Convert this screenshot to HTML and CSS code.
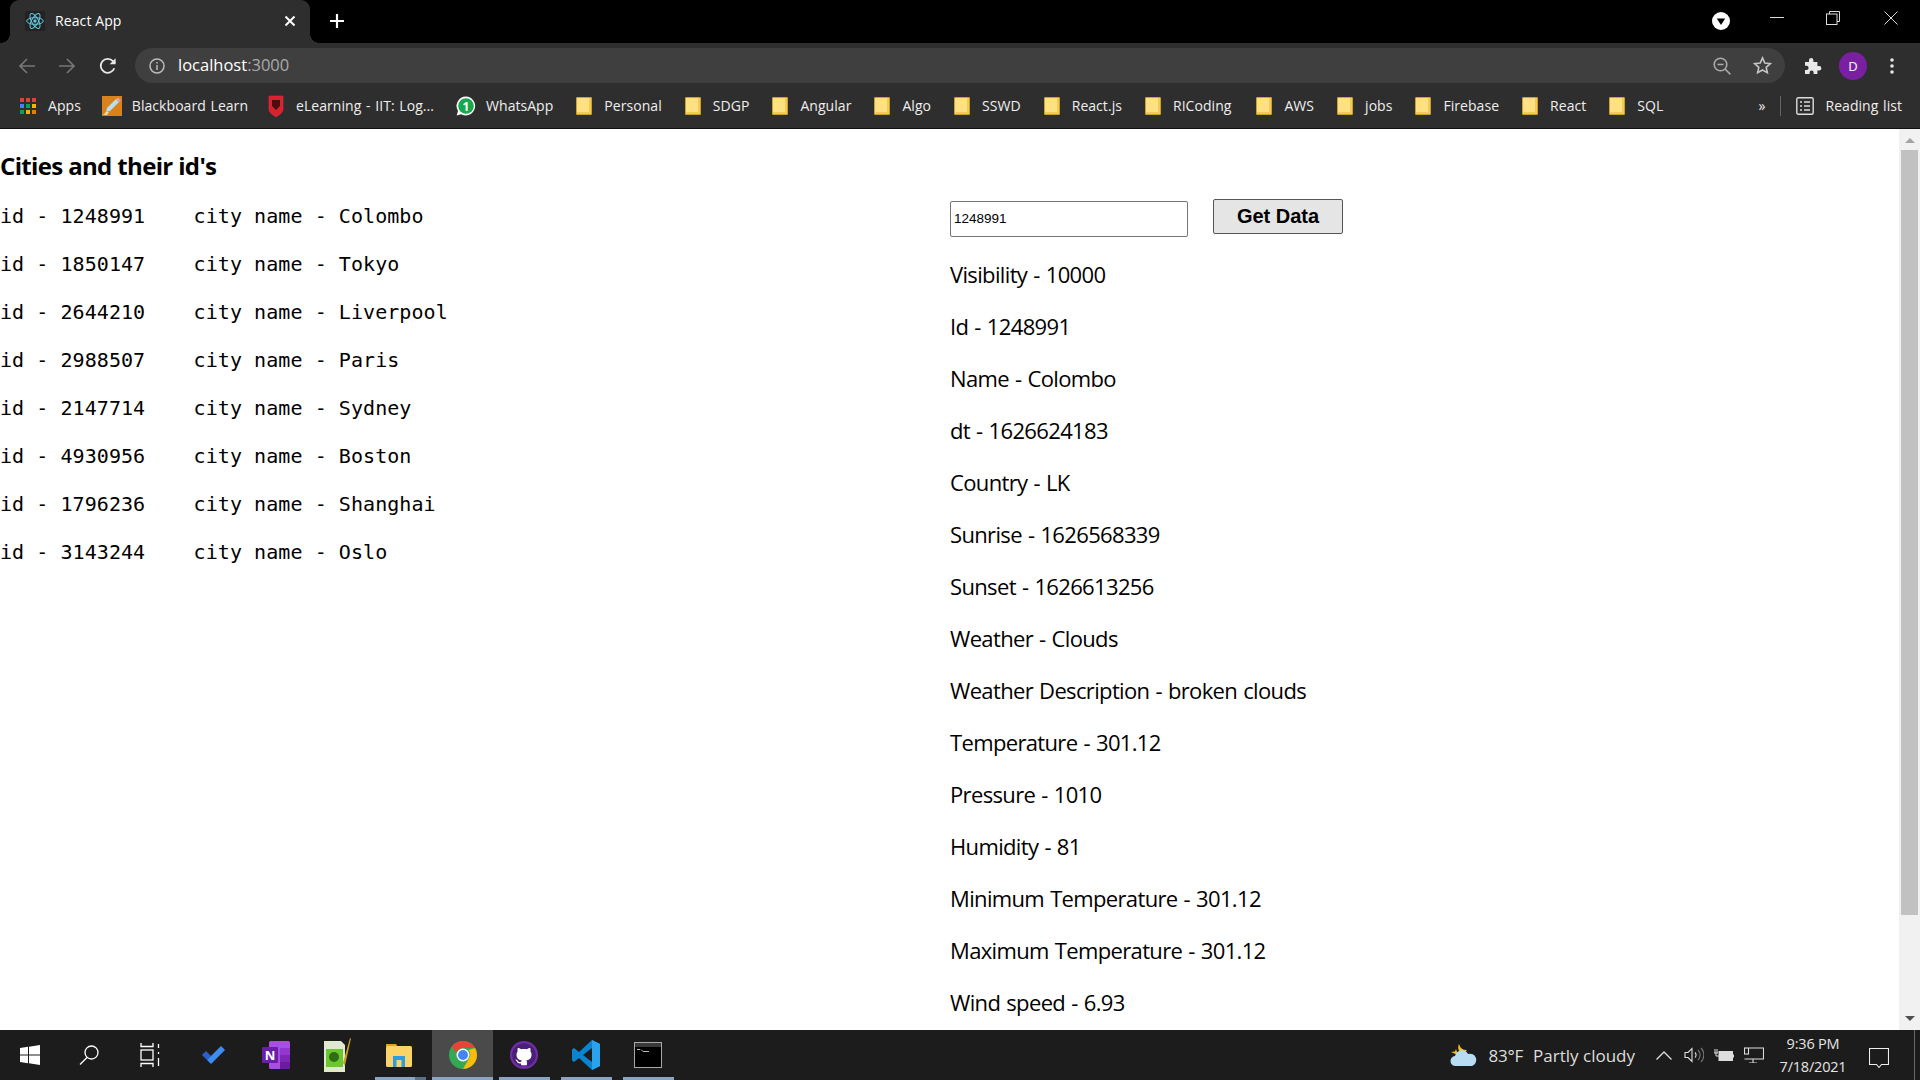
FILE: index.html
```html
<!DOCTYPE html>
<html lang="en">
<head>
<meta charset="utf-8">
<title>React App</title>
<link rel="stylesheet" href="styles.css">
</head>
<body>
<div class="screen">
  <header class="titlebar">
    <div class="tab">
      <span class="favicon"><svg viewBox="0 0 24 24" width="20" height="20" fill="none" stroke="#61c8dc" stroke-width="1.2"><ellipse cx="12" cy="12" rx="10" ry="4"/><ellipse cx="12" cy="12" rx="10" ry="4" transform="rotate(60 12 12)"/><ellipse cx="12" cy="12" rx="10" ry="4" transform="rotate(120 12 12)"/><circle cx="12" cy="12" r="2" fill="#61c8dc" stroke="none"/></svg></span>
      <span class="tab-title">React App</span>
      <svg class="tab-close" viewBox="0 0 12 12" width="12" height="12" stroke="#fff" stroke-width="2"><path d="M1.5 1.5l9 9M10.5 1.5l-9 9"/></svg>
    </div>
    <svg class="new-tab" viewBox="0 0 16 16" width="16" height="16" stroke="#fff" stroke-width="2.2"><path d="M8 1v14M1 8h14"/></svg>
    <div class="window-tools">
      <svg class="media" viewBox="0 0 18 18" width="18" height="18"><circle cx="9" cy="9" r="9" fill="#fff"/><path d="M4.8 6.5h8.4L9 13z" fill="#000"/></svg>
      <svg class="win-btn min" viewBox="0 0 14 14" width="14" height="14" stroke="#ddd"><path d="M0 6.5h14"/></svg>
      <svg class="win-btn rest" viewBox="0 0 14 14" width="14" height="14" fill="none" stroke="#ddd"><path d="M3.5 3V.5h10v10H11"/><rect x=".5" y="3" width="10.5" height="10.5"/></svg>
      <svg class="win-btn close" viewBox="0 0 14 14" width="14" height="14" stroke="#ddd"><path d="M.5.5l13 13M13.5.5l-13 13"/></svg>
    </div>
  </header>

  <nav class="toolbar">
    <svg class="nav back" viewBox="0 0 18 18" width="18" height="18" fill="none" stroke="#777" stroke-width="1.7"><path d="M17 9H2M9 2L2 9l7 7"/></svg>
    <svg class="nav fwd" viewBox="0 0 18 18" width="18" height="18" fill="none" stroke="#777" stroke-width="1.7"><path d="M1 9h15M9 2l7 7-7 7"/></svg>
    <svg class="nav reload" viewBox="0 0 18 18" width="18" height="18" fill="none" stroke="#e6e6e6" stroke-width="1.8"><path d="M15.3 11.3A7 7 0 1 1 14 4.2L16 6.4"/><path d="M16.6 1.2v6h-6" fill="#e6e6e6" stroke="none"/></svg>
    <div class="omnibox">
      <svg class="info" viewBox="0 0 16 16" width="16" height="16" fill="none" stroke="#bbb" stroke-width="1.5"><circle cx="8" cy="8" r="7"/><path d="M8 7v5M8 4v1.6"/></svg>
      <span class="url">localhost<span class="port">:3000</span></span>
      <span class="spacer"></span>
      <svg class="zoom-icon" viewBox="0 0 18 18" width="18" height="18" fill="none" stroke="#aaa" stroke-width="1.6"><circle cx="7.5" cy="7.5" r="6.3"/><path d="M4.5 7.5h6M12 12l5.4 5.4"/></svg>
      <svg class="star" viewBox="0 0 20 20" width="19" height="19" fill="none" stroke="#c4c4c4" stroke-width="1.7"><path d="M10 2l2.4 5.4 5.8.6-4.3 3.9 1.2 5.7L10 14.7l-5.1 2.9 1.2-5.7L1.8 8l5.8-.6z"/></svg>
    </div>
    <svg class="puzzle" viewBox="0 0 18 18" width="18" height="18" fill="#e8e8e8"><path d="M1 5h4V3.2a2.2 2.2 0 0 1 4.4 0V5h4v4h1.8a2.2 2.2 0 0 1 0 4.4h-1.8V17H9.6v-1.6a2 2 0 0 0-4 0V17H1v-4h1.5a2.1 2.1 0 0 0 0-4.2H1z"/></svg>
    <span class="avatar">D</span>
    <svg class="kebab" viewBox="0 0 4 16" width="4" height="16" fill="#e6e6e6"><circle cx="2" cy="2" r="1.8"/><circle cx="2" cy="8" r="1.8"/><circle cx="2" cy="14" r="1.8"/></svg>
  </nav>

  <nav class="bookmarks">
    <a class="bm apps"><svg viewBox="0 0 16 16" width="16" height="16"><g fill="#db4437"><rect width="4" height="4"/><rect x="6" width="4" height="4"/><rect x="12" width="4" height="4"/></g><g fill="#4285f4"><rect y="6" width="4" height="4"/></g><rect x="6" y="6" width="4" height="4" fill="#0f9d58"/><rect x="12" y="6" width="4" height="4" fill="#f4b400"/><rect y="12" width="4" height="4" fill="#0f9d58"/><rect x="6" y="12" width="4" height="4" fill="#f4b400"/><rect x="12" y="12" width="4" height="4" fill="#e67c00"/></svg><span>Apps</span></a>
    <a class="bm"><svg class="wide" viewBox="0 0 20 20" width="20" height="20"><rect width="20" height="20" fill="#d9821c"/><path d="M4 16l1-4L14 3l3 3-9 9z" fill="#b6e0ee"/><path d="M14 3l2-1.500 3 3L17 6z" fill="#e79bb0"/><path d="M1 19l3-3 3 0-2 3z" fill="#f7d9a0"/></svg><span>Blackboard Learn</span></a>
    <a class="bm tight-3"><svg viewBox="0 0 16 22" width="16" height="22"><path d="M1 1h14v13c0 4-4 6-7 8-3-2-7-4-7-8z" fill="#d8232a" stroke="#f26" stroke-width=".5"/><path d="M4 5h8v6l-4 4-4-4z" fill="#4a0d10"/></svg><span>eLearning - IIT: Log...</span></a>
    <a class="bm tight-1"><svg class="wide" viewBox="0 0 20 20" width="20" height="20"><path d="M10 .5a9.500 9.500 0 0 0-8 14.500L.7 19.500 5 18.300A9.500 9.500 0 1 0 10 .5z" fill="#fff"/><circle cx="10" cy="10" r="7.800" fill="#17a84b"/><text x="10" y="14.500" class="wa-num">1</text></svg><span>WhatsApp</span></a>
    <a class="bm"><i class="folder"></i><span>Personal</span></a>
    <a class="bm"><i class="folder"></i><span>SDGP</span></a>
    <a class="bm"><i class="folder"></i><span>Angular</span></a>
    <a class="bm"><i class="folder"></i><span>Algo</span></a>
    <a class="bm"><i class="folder"></i><span>SSWD</span></a>
    <a class="bm"><i class="folder"></i><span>React.js</span></a>
    <a class="bm"><i class="folder"></i><span>RICoding</span></a>
    <a class="bm loose-2"><i class="folder"></i><span>AWS</span></a>
    <a class="bm"><i class="folder"></i><span>jobs</span></a>
    <a class="bm"><i class="folder"></i><span>Firebase</span></a>
    <a class="bm"><i class="folder"></i><span>React</span></a>
    <a class="bm"><i class="folder"></i><span>SQL</span></a>
    <span class="spacer"></span>
    <span class="more">»</span>
    <i class="bm-divider"></i>
    <a class="bm reading"><svg viewBox="0 0 18 18" width="18" height="18" fill="none" stroke="#ddd" stroke-width="1.400"><rect x=".8" y=".8" width="16.400" height="16.400" rx="1.500"/><path d="M4 5h2M4 9h2M4 13h2M8 5h6M8 9h6M8 13h6"/></svg><span>Reading list</span></a>
  </nav>

  <div class="viewport">
    <main class="page">
      <section class="cities">
        <h2 class="cities-title">Cities and their id's</h2>
        <p class="city">id - 1248991    city name - Colombo</p>
        <p class="city">id - 1850147    city name - Tokyo</p>
        <p class="city">id - 2644210    city name - Liverpool</p>
        <p class="city">id - 2988507    city name - Paris</p>
        <p class="city">id - 2147714    city name - Sydney</p>
        <p class="city">id - 4930956    city name - Boston</p>
        <p class="city">id - 1796236    city name - Shanghai</p>
        <p class="city">id - 3143244    city name - Oslo</p>
      </section>
      <section class="weather">
        <form class="search">
          <input class="search-input" type="text" value="1248991">
          <button class="search-btn" type="button">Get Data</button>
        </form>
        <p class="stat">Visibility - 10000</p>
        <p class="stat">Id - 1248991</p>
        <p class="stat">Name - Colombo</p>
        <p class="stat">dt - 1626624183</p>
        <p class="stat">Country - LK</p>
        <p class="stat">Sunrise - 1626568339</p>
        <p class="stat">Sunset - 1626613256</p>
        <p class="stat">Weather - Clouds</p>
        <p class="stat">Weather Description - broken clouds</p>
        <p class="stat">Temperature - 301.12</p>
        <p class="stat">Pressure - 1010</p>
        <p class="stat">Humidity - 81</p>
        <p class="stat">Minimum Temperature - 301.12</p>
        <p class="stat">Maximum Temperature - 301.12</p>
        <p class="stat">Wind speed - 6.93</p>
      </section>
    </main>
    <aside class="scrollbar">
      <span class="arrow up"></span>
      <span class="thumb"></span>
      <span class="spacer"></span>
      <span class="arrow down"></span>
    </aside>
  </div>

  <footer class="taskbar">
    <div class="task-icons">
      <span class="task"><svg viewBox="0 0 20 20" width="20" height="20" fill="#fff"><path d="M0 3l8-1.200V9.500H0zM9 1.700L20 0v9.500H9zM0 10.500h8v7.700L0 17zM9 10.500h11V20L9 18.300z"/></svg></span>
      <span class="task"><svg viewBox="0 0 20 20" width="20" height="20" fill="none" stroke="#fff" stroke-width="1.300"><circle cx="12.500" cy="7.500" r="6.500"/><path d="M8 12.500L1 19.500"/></svg></span>
      <span class="task"><svg viewBox="0 0 20 24" width="20" height="24" fill="none" stroke="#fff" stroke-width="1.300"><path d="M1 0v3.500h12V0M1 24v-3.500h12V24"/><rect x="1" y="7" width="12" height="10"/><path d="M18.500 1v4M18.500 9v2M18.500 15v8"/></svg></span>
      <span class="task"><svg viewBox="0 0 24 24" width="24" height="24"><path d="M1 12l4-4 5 5-4 4z" fill="#2a60c8"/><path d="M6 17L20 3l4 4L10 21z" fill="#3f8cf0"/></svg></span>
      <span class="task"><svg viewBox="0 0 30 30" width="30" height="30"><rect x="8" y="1" width="21" height="28" rx="1.500" fill="#a64fe0"/><rect x="19" y="8" width="10" height="7" fill="#9238d0"/><rect x="19" y="15" width="10" height="7" fill="#7e26b8"/><rect x="19" y="22" width="10" height="7" fill="#6a1c9c"/><rect x="1" y="7" width="16" height="16" rx="1" fill="#6a1fa8"/><text x="9" y="20" class="one-n">N</text></svg></span>
      <span class="task"><svg viewBox="0 0 30 36" width="30" height="36"><path d="M2 4h17l4 4v27H2z" fill="#dfe8d0"/><rect x="4" y="12" width="17" height="18" fill="#6cc72e"/><circle cx="12" cy="20" r="5" fill="#2e6d12"/><path d="M21 26L28 1l1 .5-6 27z" fill="#c9a020"/></svg></span>
      <span class="task run-files"><svg viewBox="0 0 28 28" width="28" height="28"><path d="M1 3h10l2 3H1z" fill="#e0a020"/><rect x="1" y="5" width="26" height="21" rx="1.500" fill="#fbd468"/><path d="M8 26V15h12v11h-3.500v-7h-5v7z" fill="#2f9be0"/></svg></span>
      <span class="task active"><svg viewBox="0 0 28 28" width="28" height="28"><circle cx="14" cy="14" r="14" fill="#34a853"/><path d="M14 0a14 14 0 0 1 12.100 7H14a7 7 0 0 0-6.700 5L2.900 5.500A14 14 0 0 1 14 0z" fill="#ea4335"/><path d="M26.100 7A14 14 0 0 1 14 28l6-10.500A7 7 0 0 0 19.500 9z" fill="#fbbc05"/><circle cx="14" cy="14" r="6.500" fill="#fff"/><circle cx="14" cy="14" r="5" fill="#4285f4"/></svg></span>
      <span class="task run"><svg viewBox="-1.500 -1.500 19 19" width="28" height="28"><circle cx="8" cy="8" r="9.500" fill="#6f2da8"/><circle cx="8" cy="8" r="7" fill="#fff"/><path fill="#4a1f78" d="M8 0C3.580 0 0 3.580 0 8c0 3.540 2.290 6.530 5.470 7.590.4.070.55-.17.55-.38 0-.19-.01-.82-.01-1.490-2.010.37-2.530-.49-2.690-.94-.09-.23-.48-.94-.82-1.130-.28-.15-.68-.52-.01-.53.63-.01 1.080.58 1.230.82.72 1.210 1.870.87 2.330.66.070-.52.28-.87.51-1.070-1.780-.2-3.640-.89-3.640-3.950 0-.87.31-1.590.82-2.150-.08-.2-.36-1.020.08-2.120 0 0 .67-.21 2.200.82.64-.18 1.320-.27 2-.27.68 0 1.360.09 2 .27 1.530-1.040 2.200-.82 2.200-.82.44 1.100.16 1.920.08 2.120.51.56.82 1.270.82 2.150 0 3.070-1.870 3.750-3.650 3.950.29.25.54.73.54 1.480 0 1.070-.01 1.930-.01 2.200 0 .21.15.46.55.38A8.013 8.013 0 0016 8c0-4.420-3.580-8-8-8z"/></svg></span>
      <span class="task run"><svg viewBox="0 0 28 30" width="28" height="30"><path d="M20 0l8 4v22l-8 4L7 18l-5 4-2-1.500V9.500L2 8l5 4z" fill="#0a84d0"/><path d="M20 8v14l-9-7z" fill="#1c1c1c"/><path d="M20 0l8 4v22l-8 4z" fill="#2ba3ec"/></svg></span>
      <span class="task run last"><svg viewBox="0 0 28 26" width="28" height="26"><rect width="28" height="26" fill="#a8a8a8"/><rect x="1" y="1" width="26" height="4" fill="#3a3a3a"/><rect x="1" y="5" width="26" height="20" fill="#000"/><path d="M3 7.500h3M7 7.500l2 2h6" stroke="#bbb" fill="none"/></svg></span>
    </div>
    <span class="spacer"></span>
    <div class="tray">
      <svg class="tray-weather" viewBox="0 0 28 24" width="28" height="24"><path d="M9 1a7 7 0 0 0 2 9 7 7 0 0 0 6-3A8 8 0 0 1 9 1z" fill="#f7c21e"/><path d="M1 9l4-.5L6 6l2 6z" fill="#f7c21e"/><path d="M6 23a5 5 0 0 1-1-10 7 7 0 0 1 13-2 6 6 0 0 1 4 12z" fill="#b8dcf4"/></svg>
      <span class="tray-temp">83°F</span>
      <span class="tray-cond">Partly cloudy</span>
      <svg class="chev" viewBox="0 0 16 9" width="16" height="9" fill="none" stroke="#ddd" stroke-width="1.300"><path d="M.5 8.500L8 1l7.500 7.500"/></svg>
      <svg class="sys" viewBox="0 0 20 16" width="20" height="16" fill="none" stroke="#ddd" stroke-width="1.100"><path d="M1 5.500h3L8 1.500v13l-4-4H1z"/><path d="M11 5.500a3.500 3.500 0 0 1 0 5"/><path d="M14 3a7 7 0 0 1 0 10M17 1a10 10 0 0 1 0 14" stroke="#777"/></svg>
      <svg class="sys" viewBox="0 0 20 14" width="20" height="14" fill="none" stroke="#ddd"><path d="M1 1v4M3 1v4M0 5h4M2 5v3h3"/><rect x="5" y="3.500" width="13.500" height="9" fill="#ddd"/><path d="M19.500 6.500v3"/></svg>
      <svg class="sys" viewBox="0 0 20 16" width="20" height="16" fill="none" stroke="#ddd" stroke-width="1.100"><path d="M5 1h14.500v11H.5M5 16h8M9 12v4"/><rect x=".5" y="1" width="4" height="6"/></svg>
      <div class="clock"><span>9:36 PM</span><span>7/18/2021</span></div>
      <svg class="notify" viewBox="0 0 20 21" width="20" height="21" fill="none" stroke="#eee" stroke-width="1.100"><path d="M.5.500h19v16h-7l-2.500 3-2.500-3h-7z"/></svg>
      <i class="show-desktop"></i>
    </div>
  </footer>
</div>
</body>
</html>
```
FILE: styles.css
```css
* { box-sizing: border-box; }
html, body { margin: 0; height: 100%; overflow: hidden; }
body { font-family: "Open Sans", "Noto Sans", sans-serif; background: #fff; }
svg { display: block; flex: none; }
.spacer { flex: 1; }
.screen { display: flex; flex-direction: column; width: 1920px; height: 1080px; }

/* title bar */
.titlebar { display: flex; align-items: center; height: 43px; padding-bottom: 1px; background: #000; flex: none; }
.tab { position: relative; display: flex; align-items: center; align-self: flex-end; width: 300px; height: 43px; margin: 0 0 -1px 10px; padding: 0 14px 2px 15px; background: #2e2e2e; border-radius: 9px 9px 0 0; color: #fff; font-size: 14px; }
.tab::before, .tab::after { content: ""; position: absolute; bottom: 0; width: 9px; height: 9px; background: radial-gradient(circle at 0 0, #000 8.5px, #2e2e2e 9px); }
.tab::before { left: -9px; }
.tab::after { right: -9px; transform: scaleX(-1); }
.favicon { display: flex; margin-right: 10px; background: #222; }
.tab-title { flex: 1; letter-spacing: .1px; }
.new-tab { margin-left: 19px; }
.window-tools { display: flex; align-items: center; margin-left: auto; }
.media { margin-right: 40px; }
.win-btn { margin-top: -6px; }
.min { margin-right: 42px; }
.rest { margin-right: 44px; }
.close { margin-right: 22px; }

/* toolbar */
.toolbar { display: flex; align-items: center; height: 43px; background: #2e2e2e; flex: none; padding: 5px 0 3px; }
.back { margin-left: 18px; }
.fwd { margin-left: 22px; }
.reload { margin-left: 23px; }
.omnibox { display: flex; align-items: center; width: 1650px; height: 35px; margin-left: 18px; padding: 0 13px 0 14px; background: #3f3f3f; border-radius: 18px; }
.info { margin-right: 13px; }
.url { padding-bottom: 2px; color: #fff; font-size: 16.500px; letter-spacing: 0; }
.port { color: #aaa; }
.star { margin-left: 22px; }
.puzzle { margin-left: 19px; }
.avatar { display: flex; align-items: center; justify-content: center; width: 28px; height: 28px; margin-left: 17px; border-radius: 50%; background: #7b1fa2; color: #fff; font-size: 13px; }
.kebab { margin-left: 23px; }

/* bookmarks */
.bookmarks { display: flex; align-items: center; gap: 23px; height: 43px; padding: 0 18px 3px 20px; background: #2e2e2e; border-bottom: 1px solid #111; flex: none; color: #eee; font-size: 14px; }
.bm { display: flex; align-items: center; gap: 12px; letter-spacing: .05px; word-spacing: 1px; white-space: nowrap; }
.apps { margin-right: -2px; }
.tight-3 { margin-left: -3px; }
.tight-1 { margin-left: -1px; }
.loose-2 { margin-left: 2px; }
.bookmarks .wide { margin-right: -2px; }
.wa-num { fill: #fff; font-size: 12px; font-weight: 700; text-anchor: middle; font-family: "Open Sans", sans-serif; }
.one-n { fill: #fff; font-size: 13px; font-weight: 700; text-anchor: middle; font-family: "Open Sans", sans-serif; }
.folder { display: block; width: 16px; height: 18px; background: #ffe184; border: 1px solid #c9a227; border-radius: 1px; box-shadow: inset -3px -3px 0 -1px #f3ca59; }
.more { font-size: 14px; margin-right: -8px; }
.bm-divider { display: block; width: 1px; height: 20px; background: #666; }
.reading { gap: 11px; margin-left: -8px; }

/* page */
.viewport { display: flex; flex: 1; min-height: 0; }
.page { display: grid; grid-template-columns: 950px 1fr; flex: 1; overflow: hidden; background: #fff; color: #000; }
.cities-title { margin: 21px 0 10px; font-size: 24px; line-height: 32px; font-weight: 700; letter-spacing: -.65px; }
.city { margin: 0; font: 20px/48px "DejaVu Sans Mono", monospace; white-space: pre; letter-spacing: .06px; }
.weather { padding-top: 70px; }
.search { display: flex; align-items: flex-start; gap: 25px; margin-bottom: 11px; }
.search-input { width: 238px; height: 36px; margin-top: 2px; padding: 0 3px 2px; border: 1.500px solid #767676; border-radius: 2px; font: 13.500px "Liberation Sans", Arial, sans-serif; color: #000; background: #fff; }
.search-btn { width: 130px; height: 35px; padding: 0; border: 1.500px solid #555; border-radius: 2px; background: #e5e5e5; color: #000; font: 700 20px "Liberation Sans", Arial, sans-serif; }
.stat { margin: 0; font-size: 22px; line-height: 52px; letter-spacing: -.65px; word-spacing: 1px; white-space: nowrap; }

/* scrollbar */
.scrollbar { display: flex; flex-direction: column; align-items: center; width: 21px; background: #f1f1f1; }
.arrow { display: block; width: 0; height: 0; border: 5px solid transparent; flex: none; }
.arrow.up { border-top: 0; border-bottom: 5px solid #a3a3a3; margin: 9px 0 7px; }
.arrow.down { border-bottom: 0; border-top: 5px solid #505050; margin-bottom: 9px; }
.thumb { display: block; width: 17px; height: 765px; background: #c1c1c1; }

/* taskbar */
.taskbar { display: flex; align-items: stretch; height: 50px; background: #1c1c1c; flex: none; color: #eee; }
.task-icons { display: grid; grid-template-columns: 60px 58px 64px 62px 64px 58px 66px 61px 62px 62px 61px; }
.task { position: relative; display: flex; align-items: center; justify-content: center; height: 50px; }
.task.active { background: #4a4a4a; box-shadow: inset 0 -3px 0 #8aa4c4; }
.run::after, .run-files::after { content: ""; position: absolute; bottom: 0; height: 3px; }
.run::after { left: 6px; right: 5px; background: #8aa4c4; }
.run.last::after { right: 4px; }
.run-files::after { left: 9px; right: 6px; background: linear-gradient(90deg, #8aa4c4 78%, #5e7088 78%); }
.tray { display: flex; align-items: center; position: relative; font-size: 17px; }
.tray-weather { margin-right: 10px; }
.tray-temp { margin-right: 10px; color: #ddd; letter-spacing: -.2px; }
.tray-cond { margin-right: 21px; color: #ddd; letter-spacing: 0; }
.chev { margin-right: 12px; }
.sys { margin-right: 10px; }
.clock { display: flex; flex-direction: column; align-items: center; gap: 3px; width: 78px; margin: 0 7px 0 0; font-size: 14.500px; line-height: 20px; color: #e4e4e4; letter-spacing: -.2px; white-space: nowrap; }
.notify { margin: 6px 25px 0 10px; }
.show-desktop { display: block; width: 1px; height: 50px; background: #666; margin-right: 5px; }
```
